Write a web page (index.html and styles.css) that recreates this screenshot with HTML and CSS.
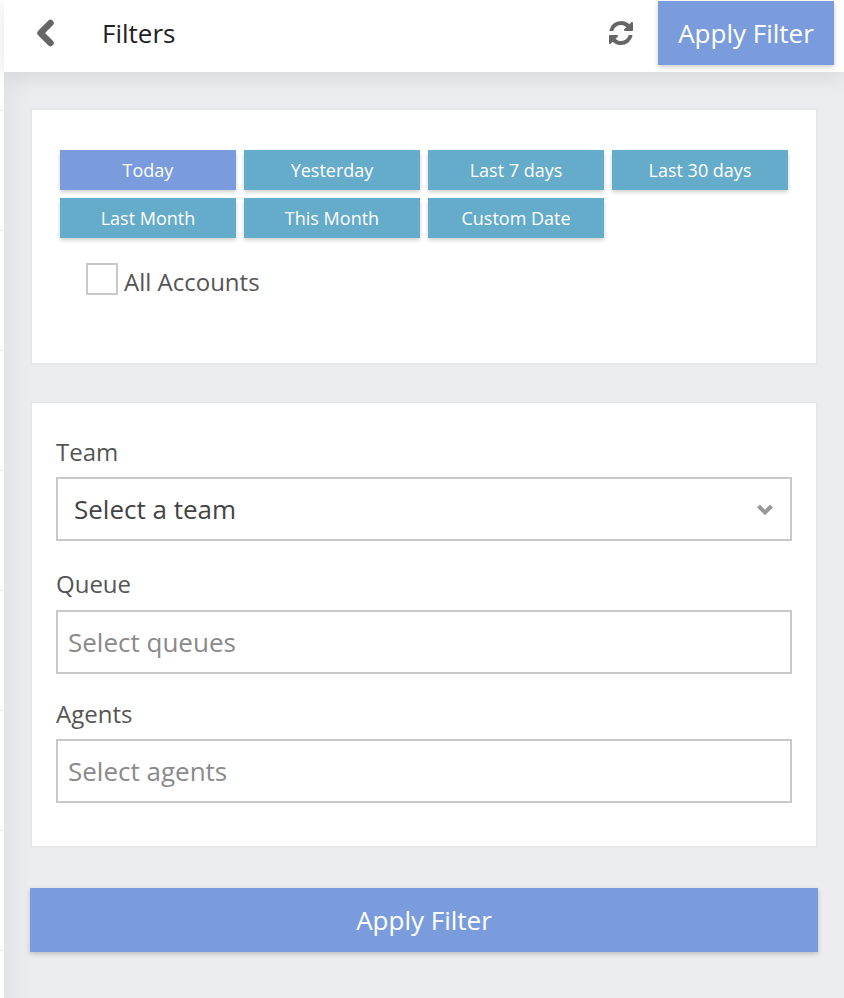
FILE: index.html
```html
<!DOCTYPE html>
<html lang="en">
<head>
    <meta charset="UTF-8">
    <meta name="viewport" content="width=device-width, initial-scale=1.0">
    <title>Filters</title>
    <link rel="stylesheet" href="styles.css">
</head>
<body>
    <div class="strip"></div>
    <div class="panel">
        <header class="topbar">
            <svg class="back-icon" viewBox="0 0 20 28" width="20" height="28">
                <path d="M13.5 4 L3.5 14 L13.5 24" fill="none" stroke="#666" stroke-width="6.5" stroke-linecap="round" stroke-linejoin="round"/>
            </svg>
            <span class="title">Filters</span>
            <svg class="refresh-icon" viewBox="0 0 1536 1536" width="24" height="24">
                <path fill="#666" d="M1511 928q0 5-1 7-64 268-268 434.500t-478 166.500q-146 0-282.500-55t-243.500-157l-129 129q-19 19-45 19t-45-19-19-45v-448q0-26 19-45t45-19h448q26 0 45 19t19 45-19 45l-137 137q71 66 161 102t187 36q134 0 250-65t186-179q11-17 53-117 8-23 30-23h192q13 0 22.500 9.500t9.500 22.500zM1536 128v448q0 26-19 45t-45 19h-448q-26 0-45-19t-19-45 19-45l138-138q-148-137-349-137-134 0-250 65t-186 179q-11 17-53 117-8 23-30 23h-199q-13 0-22.500-9.500t-9.500-22.500v-7q65-268 270-434.500t480-166.500q146 0 284 55.500t245 156.500l130-129q19-19 45-19t45 19 19 45z"/>
            </svg>
            <button class="btn-apply top-apply">Apply Filter</button>
        </header>

        <main class="content">
            <section class="card dates-card">
                <div class="date-grid">
                    <button class="date-btn active">Today</button>
                    <button class="date-btn">Yesterday</button>
                    <button class="date-btn">Last 7 days</button>
                    <button class="date-btn">Last 30 days</button>
                    <button class="date-btn">Last Month</button>
                    <button class="date-btn">This Month</button>
                    <button class="date-btn">Custom Date</button>
                </div>
                <label class="check-row">
                    <span class="checkbox"></span>
                    <span class="check-text">All Accounts</span>
                </label>
            </section>

            <section class="card fields-card">
                <div class="field-label">Team</div>
                <div class="field select-field">
                    <span>Select a team</span>
                    <svg viewBox="0 0 18 12" width="18" height="12">
                        <path d="M2.500 3 L9 9.500 L15.500 3" fill="none" stroke="#999" stroke-width="4"/>
                    </svg>
                </div>
                <div class="field-label">Queue</div>
                <div class="field placeholder">Select queues</div>
                <div class="field-label">Agents</div>
                <div class="field placeholder">Select agents</div>
            </section>

            <button class="btn-apply bottom-apply">Apply Filter</button>
        </main>
    </div>
</body>
</html>
```

FILE: styles.css
```css
* {
    box-sizing: border-box;
}

body {
    margin: 0;
    height: 998px;
    display: flex;
    overflow: hidden;
    background-color: #fff;
    font-family: "Open Sans", sans-serif;
    color: #555;
}

.strip {
    width: 4px;
    flex-shrink: 0;
    background: repeating-linear-gradient(to bottom, transparent 0, transparent 110px, #e6e6e6 110px, #e6e6e6 111px, transparent 111px, transparent 120px);
}

.panel {
    flex: 1;
    background: linear-gradient(to right, #e3e4e8, #ecedf1 26px);
    display: flex;
    flex-direction: column;
    min-width: 0;
}

.topbar {
    height: 72px;
    flex-shrink: 0;
    background: #fff;
    display: flex;
    align-items: center;
    box-shadow: 0 4px 24px rgba(0, 0, 0, 0.1);
    padding: 0 10px 6px 32.5px;
}

.back-icon {
    margin-right: 45.5px;
}

.title {
    font-size: 26px;
    color: #222;
    flex: 1;
}

.refresh-icon {
    margin-right: 25px;
}

button {
    font-family: inherit;
    border: none;
    color: #fff;
    cursor: pointer;
}

.btn-apply {
    background-color: #7a9cdc;
    box-shadow: 0 2px 5px rgba(0, 0, 0, 0.2);
}

.top-apply {
    width: 176px;
    height: 64px;
    font-size: 26px;
}

.content {
    padding: 36px 26px 0;
}

.card {
    background: #fff;
    border: 2px solid #e6e7e8;
}

.dates-card {
    height: 257px;
    padding: 40px 28px 0;
}

.date-grid {
    display: grid;
    grid-template-columns: repeat(4, 176px);
    grid-auto-rows: 40px;
    gap: 8px;
}

.date-btn {
    background-color: #65abca;
    font-size: 18px;
    box-shadow: 0 2px 4px rgba(0, 0, 0, 0.2);
}

.date-btn.active {
    background-color: #7a9cdc;
}

.check-row {
    display: flex;
    align-items: flex-start;
    gap: 6px;
    margin-top: 25px;
    margin-left: 26px;
    font-size: 24px;
}

.checkbox {
    width: 32px;
    height: 32px;
    border: 2px solid #c9c9c9;
}

.check-text {
    line-height: 32px;
    margin-top: 3px;
}

.fields-card {
    height: 447px;
    margin-top: 36px;
    padding: 34px 24px 0;
}

.field-label {
    font-size: 24px;
    line-height: 30px;
    margin-bottom: 10px;
}

.field {
    height: 64px;
    border: 2px solid #c9c9c9;
    display: flex;
    align-items: center;
    font-size: 26px;
    margin-bottom: 25px;
    padding-left: 10px;
}

.select-field {
    justify-content: space-between;
    color: #444;
    margin-bottom: 28px;
    padding-left: 16px;
    padding-right: 16px;
}

.select-field + .field-label {
    margin-bottom: 11px;
}

.placeholder {
    color: #8a8a8a;
}

.bottom-apply {
    display: block;
    width: 788px;
    height: 64px;
    margin-top: 40px;
    font-size: 26px;
}
```
